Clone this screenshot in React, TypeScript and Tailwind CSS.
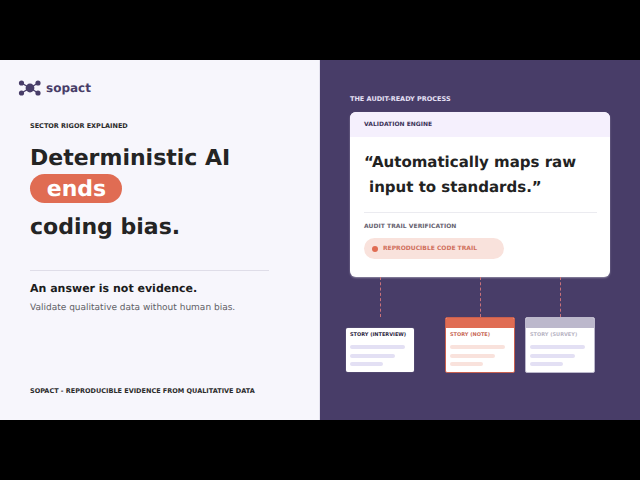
import React from 'react'

const font = "font-['DejaVu_Sans',sans-serif] [text-rendering:geometricPrecision]"

function Logo() {
  return (
    <svg width="24" height="16" viewBox="0 0 24 16" className="block">
      <g stroke="#483d68" strokeWidth="1.4">
        <line x1="3.5" y1="3" x2="12" y2="8" />
        <line x1="3.5" y1="13" x2="12" y2="8" />
        <line x1="20" y1="3" x2="12" y2="8" />
        <line x1="20" y1="13" x2="12" y2="8" />
      </g>
      <g fill="#483d68">
        <circle cx="3.5" cy="3" r="2.6" />
        <circle cx="3.5" cy="13" r="2.6" />
        <circle cx="20" cy="3" r="2.6" />
        <circle cx="20" cy="13" r="2.6" />
        <circle cx="12" cy="8" r="4.4" />
      </g>
    </svg>
  )
}

function Connector({ className = '' }: { className?: string }) {
  return <div className={`h-[40px] w-0 border-l border-dashed border-[#c9727a] ${className}`} />
}

interface StoryProps {
  label: string
  size: string
  top?: string
  labelClass: string
  barClass: string
  frameClass: string
}

function Story({ label, size, top, labelClass, barClass, frameClass }: StoryProps) {
  return (
    <div className={`${size} bg-white rounded-[2px] overflow-hidden ${frameClass}`}>
      {top && <div className={`h-[10px] ${top}`} />}
      <div className="px-1 pt-[3px]">
        <div className={`text-[5px] leading-[9px] font-bold whitespace-nowrap ${labelClass}`}>{label}</div>
        <div className={`mt-[5px] h-[4px] w-[55px] rounded-full ${barClass}`} />
        <div className={`mt-[4.5px] h-[4px] w-[45px] rounded-full ${barClass}`} />
        <div className={`mt-[4.5px] h-[4px] w-[33px] rounded-full ${barClass}`} />
      </div>
    </div>
  )
}

export default function App() {
  return (
    <div className={`w-[640px] h-[480px] bg-black py-[60px] ${font}`}>
      <div className="flex h-[360px]">
        <div className="w-[320px] h-full bg-[#f7f6fc] flex flex-col pl-[30px] pr-[50px] border-r border-[#e4e2ee]">
          <div className="flex items-center gap-[4px] -ml-[12px] mt-[20px] h-[15px]">
            <Logo />
            <span className="text-[12px] font-bold text-[#483d68]">sopact</span>
          </div>
          <div className="mt-[27px] text-[6.5px] leading-[9px] font-bold text-[#2b2b2b]">SECTOR RIGOR EXPLAINED</div>
          <div className="mt-[11px] text-[22px] leading-[34px] font-bold text-[#242424]">
            <div>Deterministic AI</div>
            <div className="w-[92px] h-[29px] -mt-[2px] rounded-full bg-[#e06c53] text-white text-center leading-[31px] pl-[1px]">ends</div>
            <div className="mt-[8px]">coding bias.</div>
          </div>
          <div className="mt-[25px] border-t border-[#dfdde8]" />
          <div className="mt-[10px] text-[11px] leading-[15px] font-bold text-[#1c1c1c]">An answer is not evidence.</div>
          <div className="mt-[5px] text-[9px] leading-[14px] text-[#5f5f66]">Validate qualitative data without human bias.</div>
          <div className="mt-auto mb-[24px] text-[6.5px] leading-[9px] font-bold whitespace-nowrap text-[#2b2b2b]">SOPACT - REPRODUCIBLE EVIDENCE FROM QUALITATIVE DATA</div>
        </div>

        <div className="w-[320px] h-full bg-[#483d68] flex flex-col pl-[30px]">
          <div className="mt-[35px] text-[6.5px] leading-[9px] font-bold text-[#e6e0f5]">THE AUDIT-READY PROCESS</div>
          <div className="mt-[8px] w-[260px] h-[165px] bg-white rounded-[6px] overflow-hidden shadow-[0_1px_2px_rgba(255,255,255,0.4)]">
            <div className="h-[25px] bg-[#f5f0fd] px-[14px] pt-[8px] text-[6px] leading-[9px] font-bold text-[#3b3258]">VALIDATION ENGINE</div>
            <div className="px-[14px] pt-[13px]">
              <div className="text-[15px] leading-[25px] font-bold text-[#222222]">
                <div>“Automatically maps raw</div>
                <div className="pl-[5px]">input to standards.”</div>
              </div>
              <div className="mt-[12px] mr-[-1px] border-t border-[#ebebf0]" />
              <div className="mt-[9px] text-[6px] leading-[9px] font-bold tracking-[0.05px] text-[#66626f]">AUDIT TRAIL VERIFICATION</div>
              <div className="mt-[7px] w-[140px] h-[21px] rounded-full bg-[#f9e2dc] flex items-center pl-2 gap-[5px]">
                <div className="w-[6px] h-[6px] rounded-full bg-[#e06c53]" />
                <span className="text-[6px] leading-[9px] -mt-[1px] font-bold text-[#d0705c]">REPRODUCIBLE CODE TRAIL</span>
              </div>
            </div>
          </div>
          <div className="flex items-start -ml-[4px]">
            <div className="flex flex-col items-center w-[68px]">
              <Connector className="mb-[11px]" />
              <Story label="STORY (INTERVIEW)" size="w-[68px] h-[44px]" labelClass="text-[#2e2844]" barClass="bg-[#e3e0f4]" frameClass="shadow-[0_0_1px_rgba(255,255,255,0.6)]" />
            </div>
            <div className="flex flex-col items-center w-[70px] ml-[31px]">
              <Connector />
              <Story label="STORY (NOTE)" size="w-[70px] h-[56px]" top="bg-[#e06c53]" labelClass="text-[#c96a58]" barClass="bg-[#f9e2dc]" frameClass="border border-[#c9604f]" />
            </div>
            <div className="flex flex-col items-center w-[70px] ml-[10px]">
              <Connector />
              <Story label="STORY (SURVEY)" size="w-[70px] h-[56px]" top="bg-[#bcb8cc]" labelClass="text-[#b8b5c4]" barClass="bg-[#e3e0f4]" frameClass="border border-[#bcb8cc]" />
            </div>
          </div>
        </div>
      </div>
    </div>
  )
}
